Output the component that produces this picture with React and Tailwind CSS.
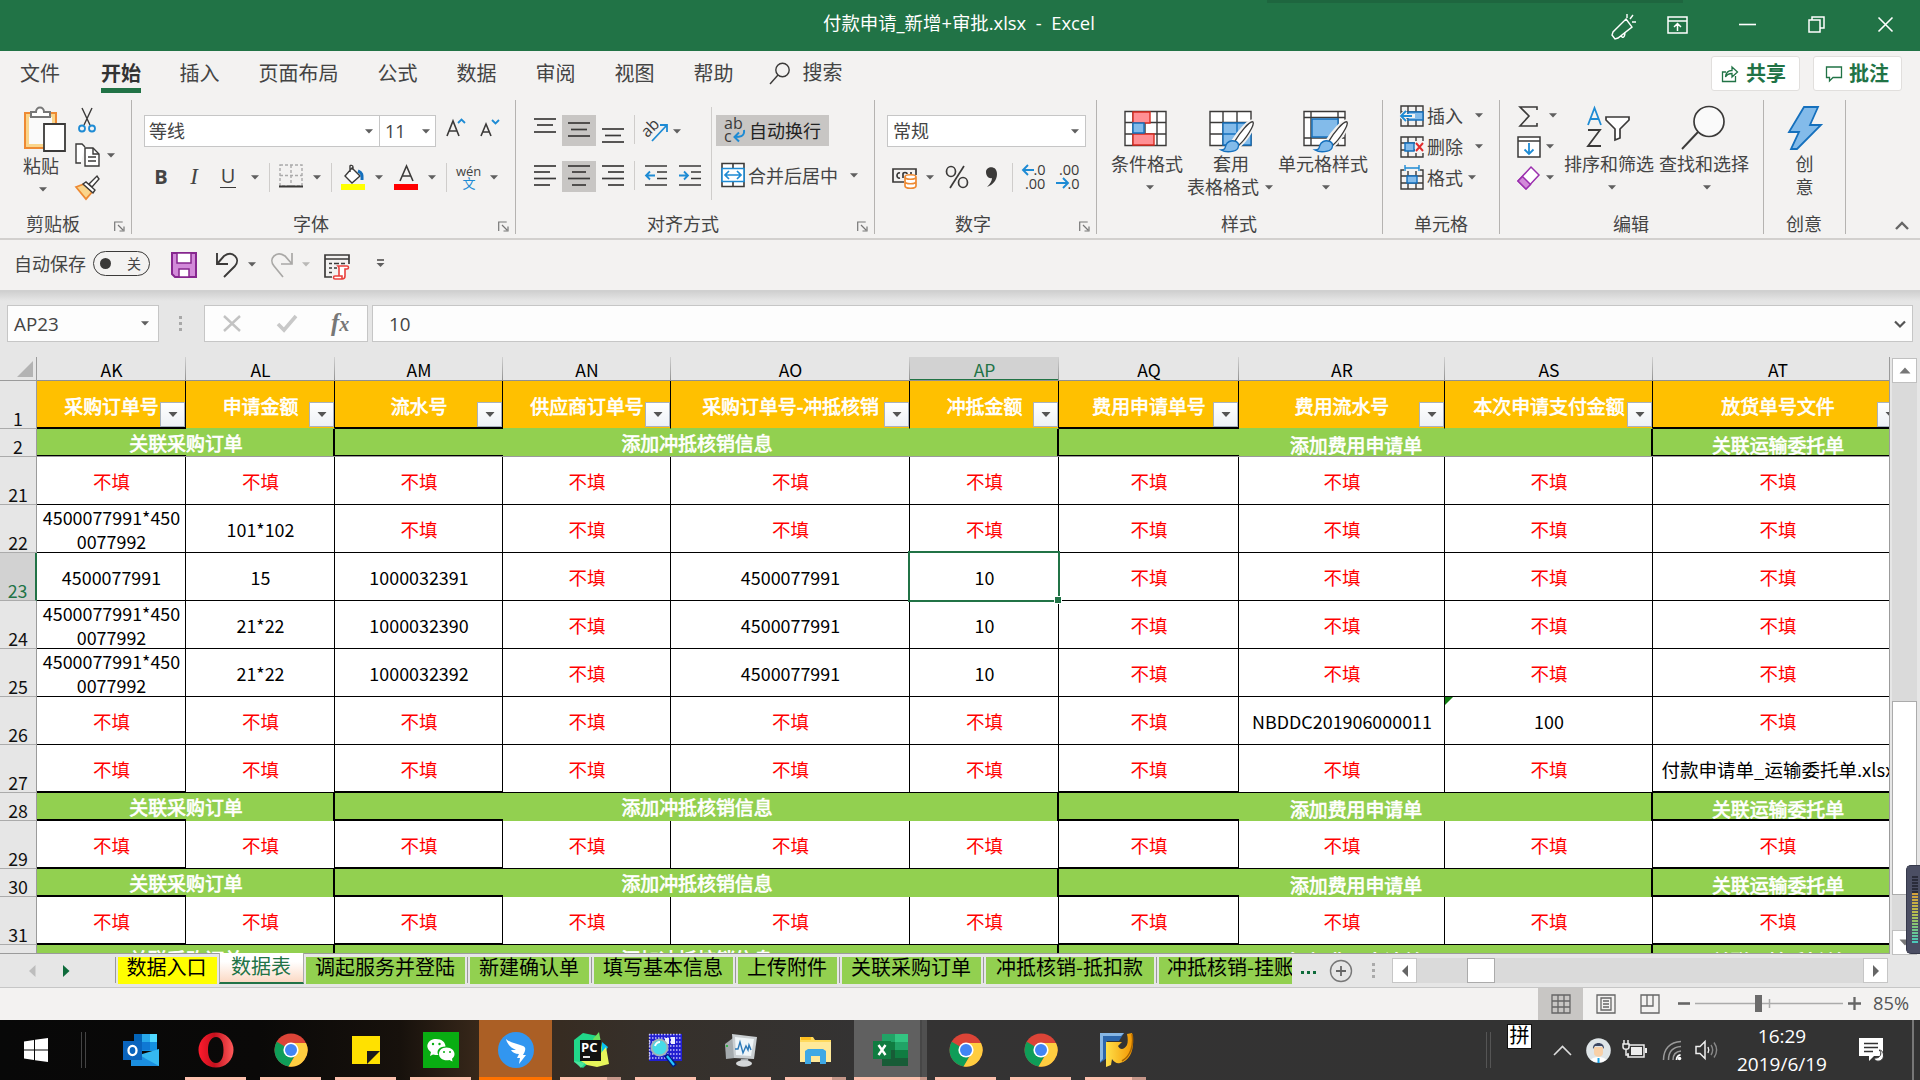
import React from "react";

const Arrow = ({ className = "", c = "#5f5f5f" }) => (
  <svg className={"shrink-0 " + className} width="8" height="5" viewBox="0 0 8 5"><path d="M0 .3h8L4 4.6z" fill={c} /></svg>
);
const I = ({ w = 24, h = 24, className = "", children }) => (
  <svg className={"shrink-0 overflow-visible " + className} width={w} height={h} viewBox={`0 0 ${w} ${h}`} fill="none" stroke="#3b3a39" strokeWidth="1.4">{children}</svg>
);
const Div = ({ className = "" }) => <div className={"h-[29px] w-px shrink-0 bg-[#cfcdcb] " + className} />;

const Launcher = ({ className = "" }) => (
  <I w={11} h={11} className={className}><path d="M.7 10V1h8M4 4l5 5M10 5.5V10H5.5" stroke="#777" strokeWidth="1.2" /></I>
);

function Group({ width, label, labelMl, launchMl, children }) {
  return (
    <section className={"flex h-[134px] shrink-0 flex-col border-r border-[#b5b3b1] " + width}>
      <div className="h-[115px]">{children}</div>
      <div className="flex h-[18px] items-center text-[18px] leading-[18px] whitespace-nowrap">
        <span className={labelMl}>{label}</span>
        {launchMl && <Launcher className={"mt-[5px] -translate-x-px " + launchMl} />}
      </div>
    </section>
  );
}

function TitleBar() {
  return (
    <header className="flex h-[51px] shrink-0 items-start bg-[#217346] text-white">
      <div className="w-[823px]" />
      <div className="mt-[12px] w-[444px] text-[18.400px] leading-[22px] whitespace-pre">付款申请_新增+审批.xlsx  -  Excel</div>
      <div className="flex h-[51px] flex-1 flex-col">
        <div className="h-[3px] w-[416px] bg-[#1e663f]" />
        <div className="flex h-[42px] items-center">
          <I w={26} h={28} className="ml-[343px] mt-[6px]"><path d="M16 6l6 8L8 25l-3 1-3-4 1-3zM11 22c1 4 4 3 4-3M17 1v4M20 6l3-4M22 9h4" stroke="#fff" /></I>
          <I w={21} h={18} className="ml-[31px] mt-[1px]"><path d="M1 1h19v16H1zM1 5h19M10.500 15V7.500M7 11l3.500-3.500L14 11" stroke="#fff" strokeWidth="1.500" /></I>
          <I w={17} h={4} className="ml-[51px]"><path d="M0 2.500h17" stroke="#fff" strokeWidth="1.600" /></I>
          <I w={17} h={17} className="ml-[52px]"><path d="M1 4h11v12H1zM4 4V1h12v11h-4" stroke="#fff" strokeWidth="1.500" /></I>
          <I w={17} h={17} className="ml-[52px]"><path d="M1.500 1.500l14 14M15.500 1.500l-14 14" stroke="#fff" strokeWidth="1.600" /></I>
        </div>
      </div>
    </header>
  );
}

const MENU = ["插入", "页面布局", "公式", "数据", "审阅", "视图", "帮助"];

function MenuTabs() {
  return (
    <nav className="flex h-[49px] shrink-0 items-start text-[20px] leading-[24px] whitespace-nowrap">
      <span className="mt-[11px] ml-[20px]">文件</span>
      <span className="mt-[11px] ml-[41px] h-[31px] border-b-[5px] border-[#217346] font-bold text-[#333]">开始</span>
      <div className="mt-[11px] ml-[38.500px] flex gap-[39px]">
        {MENU.map((m) => <span key={m}>{m}</span>)}
      </div>
      <I w={22} h={24} className="mt-[11px] ml-[35px]"><circle cx="13.500" cy="8" r="6.700" /><path d="M9 13L1 22" /></I>
      <span className="mt-[10px] ml-[12px]">搜索</span>
      <div className="mt-[5px] mr-[18px] ml-auto flex gap-[13px] font-bold text-[#217346]">
        <div className="flex h-[35px] w-[89px] items-center rounded-[3px] border border-[#e1dfdd] bg-white pl-[9px]">
          <I w={18} h={18}><path d="M5 7H1.500v9.500h13V11M4.500 12c.5-5 3-6.500 6.500-6.500V2l5.500 5-5.500 5V8.500c-3 0-5 .8-6.500 3.500z" stroke="#217346" strokeWidth="1.300" /></I>
          <span className="ml-[7px]">共享</span>
        </div>
        <div className="flex h-[35px] w-[89px] items-center rounded-[3px] border border-[#e1dfdd] bg-white pl-[11px]">
          <I w={18} h={18}><path d="M1.500 2h15v10.500H8L4.500 16v-3.500h-3z" stroke="#217346" strokeWidth="1.300" /></I>
          <span className="ml-[6px]">批注</span>
        </div>
      </div>
    </nav>
  );
}

const Lines = ({ rows, w = 22, h = 32, className = "" }) => (
  <I w={w} h={h} className={className}>
    {rows.map(([x1, x2, y]) => <path key={y} d={`M${x1} ${y}H${x2}`} strokeWidth="1.700" />)}
  </I>
);

function GridIcon({ kind }) {
  return (
    <I w={48} h={46}>
      <path d="M3 4.500h41v34H3z" fill="#fff" stroke="none" />
      {kind === "cond" && (
        <>
          <path d="M3 4.500h41v34H3zM3 15.500h41M3 27h41M11 4v34M35 4v34M23 4v34" />
          <path d="M11 5h17v11H11zM11 27h21v11H11z" fill="#ff8f94" stroke="#d92b20" />
          <path d="M11 16h11v10H11z" fill="#83bbea" stroke="#1570bd" />
        </>
      )}
      {kind === "table" && (
        <>
          <path d="M3 4.500h41v34H3zM3 15.500h41M3 27h41M16 4v34M30 4v34" />
          <path d="M16 16h28v22H16z" fill="#83bbea" stroke="#1570bd" /><path d="M30 16v22M16 27h28" stroke="#1570bd" />
        </>
      )}
      {kind === "cell" && (
        <>
          <path d="M3 4.500h41v34H3zM3 10.500h41M3 31h41M10 4v34M37 4v34" />
          <path d="M11 12h26v18H11z" fill="#83bbea" stroke="#1570bd" />
        </>
      )}
      {kind !== "cond" && (
        <>
          <path d="M46 15c2 3-8 18-14 23l-5-4c4-7 16-21 19-19z" fill="#fff" stroke="#f3f2f1" strokeWidth="5" />
          <path d="M46 15c2 3-8 18-14 23l-4-4c4-7 15-21 18-19z" fill="#fff" />
          <path d="M27 34c3 0 6 3 4 7-2 4-12 5-17 2 4 0 4-2 5-5 1-3 5-5 8-4z" fill="#83bbea" stroke="#1570bd" />
        </>
      )}
    </I>
  );
}

function Ribbon() {
  return (
    <div className="flex h-[138px] shrink-0 text-[18px] leading-[18px] whitespace-nowrap">
      <Group width="w-[132px]" label="剪贴板" labelMl="ml-[26px]" launchMl="ml-[35px]">
        <div className="flex">
          <div className="ml-[23px] flex w-[43px] flex-col pt-[6px]">
            <I w={43} h={47}>
              <path d="M2 7h31v35H2z" fill="#fad58b" stroke="#ee8a33" strokeWidth="2" /><path d="M6 11h23v27H6z" fill="#fafafa" stroke="none" />
              <path d="M8 11V6h5c0-6 8-6 8 0h6v5z" fill="#fff" stroke="#777" strokeWidth="2" />
              <path d="M21 18h21v27H21z" fill="#fff" stroke="#3b3a39" strokeWidth="1.800" />
            </I>
            <span className="mt-[4px]">粘贴</span>
            <Arrow className="mt-[12px] ml-[16px]" />
          </div>
          <div className="ml-[8px] pt-[7px]">
            <I w={28} h={26}><path d="M8 1l8 17M18 1l-8 17" /><circle cx="8" cy="21.500" r="3" stroke="#1e8bd4" strokeWidth="1.800" /><circle cx="18" cy="21.500" r="3" stroke="#1e8bd4" strokeWidth="1.800" /></I>
            <div className="mt-[9px] flex items-center">
              <I w={28} h={26}><path d="M7 21H2V2h6l3 3M11 6h8l6 6v12H11z" fill="#fff" /><path d="M19 6v6h6M14 15h8M14 19h8" /></I>
              <Arrow className="ml-[5px]" />
            </div>
            <I w={28} h={26} className="mt-[7px]"><path d="M2 12l8-3 8 8-6 7z" fill="#fad58b" stroke="#ee8a33" strokeWidth="1.800" /><path d="M9 9l3-2 9 8-2 3zM15 9l8-8 2 3-7 8z" fill="#fff" /></I>
          </div>
        </div>
      </Group>

      <Group width="w-[384px]" label="字体" labelMl="ml-[161px]" launchMl="ml-[170px]">
        <div className="flex h-[47px] pt-[15px]">
          <div className="ml-[12px] flex h-[32px] w-[236px] items-center justify-between border border-[#c6c6c6] bg-white pr-[6px] pl-[4px]"><span>等线</span><Arrow /></div>
          <div className="-ml-px flex h-[32px] w-[57px] items-center justify-between border border-[#c6c6c6] bg-white pr-[5px] pl-[5px]"><span>11</span><Arrow /></div>
          <I w={20} h={24} className="ml-[10px]"><path d="M1 21L7 6l6 15M3 16h8" strokeWidth="1.600" /><path d="M12 8l3.500-3.500L19 8" stroke="#1e8bd4" strokeWidth="1.800" /></I>
          <I w={20} h={24} className="ml-[14px]"><path d="M1 21L6 9l5 12M2.500 17h7" strokeWidth="1.600" /><path d="M12 5l3.500 3.500L19 5" stroke="#1e8bd4" strokeWidth="1.800" /></I>
        </div>
        <div className="mt-[14px] flex h-[32px] items-center">
          <span className="ml-[22px] w-[14px] text-center text-[20px] font-bold">B</span>
          <span className="ml-[18px] w-[16px] text-center font-['Liberation_Serif'] text-[23px] italic">I</span>
          <span className="ml-[18px] h-[22px] w-[16px] border-b-[1.500px] border-[#3b3a39] text-center text-[20px] leading-[20px]">U</span>
          <Arrow className="ml-[15px]" />
          <Div className="ml-[10px]" />
          <I w={24} h={24} className="ml-[9px] -mt-[2px]"><path d="M1 1h22v21H1zM12 1v21M1 11.500h22" stroke="#aaa" strokeDasharray="3 2" /><path d="M0 22.500h24" strokeWidth="2" /></I>
          <Arrow className="ml-[10px]" />
          <Div className="ml-[10px]" />
          <I w={25} h={26} className="ml-[9px] -mt-px"><path d="M11 4l8 8-8 7-7-7zM9 8V2c0-1 3-1 3 1v3" fill="#fff" /><path d="M17 7c5 2 4 5 4 9" stroke="#1570bd" strokeWidth="3" /><path d="M0 20h24v6H0z" fill="#ff0" stroke="none" /></I>
          <Arrow className="ml-[9px]" />
          <I w={24} h={26} className="ml-[11px] -mt-px"><path d="M6 17l6.500-15L19 17M8 12h9" strokeWidth="1.600" /><path d="M0 20h24v6H0z" fill="#f00" stroke="none" /></I>
          <Arrow className="ml-[10px]" />
          <Div className="ml-[10px]" />
          <div className="ml-[11px] w-[22px] text-center text-[13px] leading-[12px] whitespace-nowrap"><div className="-ml-[2px]">wén</div><div className="text-[#1e8bd4]">文</div></div>
          <Arrow className="ml-[10px]" />
        </div>
      </Group>

      <Group width="w-[359px]" label="对齐方式" labelMl="ml-[131px]" launchMl="ml-[139px]">
        <div className="flex">
          <div className="w-[195px]">
            <div className="flex h-[47px] pt-[15px]">
              <Lines className="ml-[18px]" rows={[[0, 22, 4], [3, 19, 10], [0, 22, 17]]} />
              <div className="ml-[6px] h-[31px] w-[34px] bg-[#c8c6c4] pl-[6px]"><Lines rows={[[0, 22, 8], [3, 19, 14.5], [0, 22, 21]]} /></div>
              <Lines className="ml-[6px]" rows={[[0, 22, 14], [3, 19, 20.5], [0, 22, 27]]} />
              <Div className="ml-[10px]" />
              <I w={25} h={28} className="ml-[9px]"><text x="-4" y="18" transform="rotate(-45 6 12)" fontSize="16" fill="#3b3a39" stroke="none">ab</text><path d="M8 26L23 10M16 10h7v7" stroke="#1e8bd4" strokeWidth="1.800" /></I>
              <Arrow className="mt-[14px] ml-[4px]" />
            </div>
            <div className="mt-[14px] flex h-[32px]">
              <Lines className="ml-[18px]" rows={[[0, 22, 5], [0, 16, 11], [0, 22, 17.500], [0, 16, 24]]} />
              <div className="ml-[6px] h-[31px] w-[34px] bg-[#c8c6c4] pl-[6px]"><Lines rows={[[0, 22, 5], [4, 18, 11], [0, 22, 17.500], [4, 18, 24]]} /></div>
              <Lines className="ml-[6px]" rows={[[0, 22, 5], [6, 22, 11], [0, 22, 17.500], [6, 22, 24]]} />
              <Div className="ml-[10px]" />
              <I w={22} h={32} className="ml-[10px]"><path d="M0 5h22M12 11h10M12 17.500h10M0 24h22" strokeWidth="1.700" /><path d="M10 14.500H1M5 10.500l-4 4 4 4" stroke="#1e8bd4" strokeWidth="1.800" /></I>
              <I w={22} h={32} className="ml-[12px]"><path d="M0 5h22M12 11h10M12 17.500h10M0 24h22" strokeWidth="1.700" /><path d="M0 14.500h9M5 10.500l4 4-4 4" stroke="#1e8bd4" strokeWidth="1.800" /></I>
            </div>
          </div>
          <div className="mt-[7px] h-[93px] w-px bg-[#cfcdcb]" />
          <div>
            <div className="mt-[15px] ml-[4px] flex h-[31px] w-[113px] items-center bg-[#c8c6c4] pl-[8px] text-[#222]">
              <I w={22} h={28}><text x="0" y="11.500" fontSize="16" fill="#3b3a39" stroke="none">ab</text><text x="0" y="25" fontSize="16" fill="#3b3a39" stroke="none">c</text><path d="M20 13c1 7-5 7-9 7M15 15.500L10.500 20l4.500 4.500" stroke="#1e8bd4" strokeWidth="2" /></I>
              <span className="ml-[3px]">自动换行</span>
            </div>
            <div className="mt-[14px] flex h-[31px] items-center">
              <I w={24} h={26} className="ml-[9px] -mt-px"><path d="M1 1.500h22v23H1zM1 7h22M1 19h22M12 1v6M12 19v6" fill="#fff" strokeWidth="1.600" /><path d="M1 6.500h22v13H1z" fill="#fff" stroke="#1e8bd4" strokeWidth="1.600" /><path d="M4 13h16M8 9l-4 4 4 4M16 9l4 4-4 4" stroke="#1e8bd4" strokeWidth="1.700" /></I>
              <span className="ml-[3px]">合并后居中</span><Arrow className="ml-[12px]" />
            </div>
          </div>
        </div>
      </Group>

      <Group width="w-[222px]" label="数字" labelMl="ml-[80px]" launchMl="ml-[89px]">
        <div className="flex h-[47px] pt-[15px]">
          <div className="ml-[12px] flex h-[32px] w-[199px] items-center justify-between border border-[#c6c6c6] bg-white pr-[6px] pl-[5px]"><span>常规</span><Arrow /></div>
        </div>
        <div className="mt-[14px] flex h-[32px] items-center">
          <I w={25} h={24} className="ml-[17px] mt-px"><path d="M12 16H1V3h23v6M8 7C4 6 4 13 8 12M11 12V8c0-2 4-2 4 0M19 6v3" strokeWidth="1.700" /><path d="M13 11v9c0 3 11 3 11 0v-9c0-3-11-3-11 0c0 3 11 3 11 0M13 15.500c0 3 11 3 11 0" fill="#fff" stroke="#ee8a33" strokeWidth="1.700" /></I>
          <Arrow className="ml-[9px]" />
          <I w={24} h={24} className="ml-[11px]"><ellipse cx="6" cy="6.500" rx="4.500" ry="5" strokeWidth="1.700" /><ellipse cx="18" cy="17.500" rx="4.500" ry="5" strokeWidth="1.700" /><path d="M19 1L5 23" strokeWidth="1.700" /></I>
          <I w={14} h={24} className="ml-[16px]"><path d="M1 7c0-6 11-7 11 2 0 6-4 11-10 13 3-3 5-6 5-9-3 1-6-2-6-6z" fill="#3b3a39" stroke="none" /></I>
          <Div className="ml-[13px]" />
          <I w={23} h={26} className="ml-[9px]"><text x="11.500" y="10.500" fontSize="14.500" fill="#3b3a39" stroke="none">.0</text><text x="3" y="24.500" fontSize="14.500" fill="#3b3a39" stroke="none">.00</text><path d="M12 6H1M6 1L1 6l5 5" stroke="#1e8bd4" strokeWidth="1.900" /></I>
          <I w={23} h={26} className="ml-[11px]"><text x="3" y="10.500" fontSize="14.500" fill="#3b3a39" stroke="none">.00</text><text x="11.500" y="24.500" fontSize="14.500" fill="#3b3a39" stroke="none">.0</text><path d="M0 19h12M7 14l5 5-5 5" stroke="#1e8bd4" strokeWidth="1.900" /></I>
        </div>
      </Group>

      <Group width="w-[286px]" label="样式" labelMl="ml-[124px]">
        <div className="flex pt-[7px] leading-[23px]">
          <div className="ml-[12px] flex w-[76px] flex-col items-center"><div className="-ml-[2px]"><GridIcon kind="cond" /></div><span>条件格式</span><Arrow className="mt-[9px] ml-[6px]" /></div>
          <div className="flex w-[90px] flex-col"><div className="ml-[22px]"><GridIcon kind="table" /></div><span className="ml-[28px]">套用</span><span className="flex items-center pl-[2px]">表格格式<Arrow className="ml-[6px]" /></span></div>
          <div className="ml-[2px] flex w-[92px] flex-col items-center"><div className="ml-[3px]"><GridIcon kind="cell" /></div><span>单元格样式</span><Arrow className="mt-[9px] ml-[6px]" /></div>
        </div>
      </Group>

      <Group width="w-[117px]" label="单元格" labelMl="ml-[31px]">
        <div className="flex h-[31px] items-center pl-[17px]">
          <I w={24} h={24}><path d="M1 2h22v20H1zM1 8h22M1 15h22M8 2v20M16 2v20" /><path d="M8 8h15v8H8z" fill="#83bbea" stroke="#1570bd" /><path d="M15 12H1M6 7l-5 5 5 5" stroke="#f3f2f1" strokeWidth="4" /><path d="M12 12H1M6 7l-5 5 5 5" stroke="#1e8bd4" strokeWidth="1.800" /></I>
          <span className="ml-[3px]">插入</span><Arrow className="ml-[12px]" />
        </div>
        <div className="flex h-[31px] items-center pl-[17px]">
          <I w={24} h={24}><path d="M1 2h22v20H1zM1 8h22M1 15h22M8 2v20M16 2v20" /><path d="M5 8h9v8H5z" fill="#83bbea" stroke="#1570bd" /><path d="M15 6h9v12h-9z" fill="#f3f2f1" stroke="none" /><path d="M16 8l7 8M23 8l-7 8" stroke="#e22b2b" strokeWidth="1.900" /></I>
          <span className="ml-[3px]">删除</span><Arrow className="ml-[12px]" />
        </div>
        <div className="flex h-[31px] items-center pl-[17px]">
          <I w={24} h={26}><path d="M1 5h22v19H1zM1 11h22M1 18h22M8 5v19M16 5v19" /><path d="M7 11h10v7H7z" fill="#83bbea" stroke="#1570bd" /><path d="M4 0h16v6H4z" fill="#f3f2f1" stroke="none" /><path d="M5 3h14M5 0v6M19 0v6" stroke="#1e8bd4" /></I>
          <span className="ml-[3px]">格式</span><Arrow className="ml-[5px]" />
        </div>
      </Group>

      <Group width="w-[264px]" label="编辑" labelMl="ml-[113px]">
        <div className="flex">
          <div className="w-[64px] pl-[17px]">
            <div className="flex h-[31px] items-center"><I w={24} h={24}><path d="M20 6V3H3l9 9-9 10h17v-3" strokeWidth="1.600" /></I><Arrow className="ml-[8px]" /></div>
            <div className="flex h-[31px] items-center"><I w={24} h={24}><path d="M1 2h22v20H1zM1 6h22" fill="#fff" strokeWidth="1.500" /><path d="M12 8v11M7.500 14.500L12 19l4.500-4.500" stroke="#1e8bd4" strokeWidth="1.800" /></I><Arrow className="ml-[5px]" /></div>
            <div className="flex h-[31px] items-center"><I w={24} h={24}><path d="M14 1l8 8L9 23l-8-8z" fill="#fff" stroke="#9b2fae" strokeWidth="1.500" /><path d="M5.500 10.500l8 8L9 23l-8-8z" fill="#d28ad9" stroke="#9b2fae" strokeWidth="1.500" /></I><Arrow className="ml-[5px]" /></div>
          </div>
          <div className="flex w-[90px] flex-col items-center pt-[7px] leading-[23px]">
            <I w={48} h={46}><path d="M3 18L9.500 1 16 18M5 12h9" stroke="#1e8bd4" strokeWidth="1.800" /><path d="M3 23h12L3 39h13" strokeWidth="1.800" /><path d="M21 10h23v3l-9 9v9l-5 2V22l-9-9z" fill="#fff" strokeWidth="1.700" /></I>
            <span>排序和筛选</span><Arrow className="mt-[9px] ml-[6px]" />
          </div>
          <div className="ml-[5px] flex w-[90px] flex-col items-center pt-[7px] leading-[23px]">
            <I w={48} h={46}><circle cx="29" cy="14.500" r="15" fill="#fafafa" strokeWidth="1.700" /><path d="M18 25L2 42" strokeWidth="1.900" /></I>
            <span>查找和选择</span><Arrow className="mt-[9px] ml-[6px]" />
          </div>
        </div>
      </Group>

      <Group width="w-[82px]" label="创意" labelMl="ml-[22px]">
        <div className="flex flex-col items-center pt-[7px] leading-[23px]">
          <I w={36} h={46}><path d="M17 0h14l-8 18h11L10 42H4l8-17H2z" fill="#83bbea" stroke="#1570bd" strokeWidth="1.800" /></I>
          <span>创</span><span>意</span>
        </div>
      </Group>
      <I w={16} h={11} className="mt-[120px] ml-[48px]"><path d="M2 9l6-6 6 6" stroke="#666" strokeWidth="2.400" /></I>
    </div>
  );
}

function QuickAccess() {
  return (
    <div className="flex h-[52px] shrink-0 items-center border-t-2 border-[#d2d0ce] pb-[3px] text-[18px] leading-[18px]">
      <span className="ml-[14px] w-[72px] whitespace-nowrap">自动保存</span>
      <div className="ml-[7px] flex h-[25px] w-[57px] items-center justify-between rounded-full border-[1.500px] border-[#3b3a39] pr-[8px] pl-[6px] text-[14px]"><span className="size-[11px] rounded-full bg-[#3b3a39]" />关</div>
      <I w={26} h={26} className="mt-[3px] ml-[21px]"><path d="M1 1h24v24H4l-3-3z" fill="#d28ad9" stroke="#86278f" strokeWidth="2" /><path d="M6 1h14v10H6zM8 17h10v8H8z" fill="#fff" stroke="#86278f" strokeWidth="1.500" /></I>
      <I w={24} h={26} className="mt-[2px] ml-[18px]"><path d="M2 1v11h11M2 12L9 4c9-6 17 3 11 10L9 25" strokeWidth="1.900" /></I>
      <Arrow className="mt-[2px] ml-[9px]" />
      <I w={24} h={26} className="mt-[2px] ml-[14px]"><path d="M22 1v11H11M22 12l-7-8C6-2-2 7 4 14l9 11" strokeWidth="1.700" stroke="#a9a8a6" /></I>
      <Arrow className="mt-[2px] ml-[8px]" c="#b9b8b6" />
      <I w={26} h={26} className="mt-[4px] ml-[14px]"><path d="M8 24H1V2h24v9M1 6h24" strokeWidth="1.700" /><path d="M5 10.500h3M5 15h3M5 19.500h3M10 10.500h5M17 10.500h4M10 15h3" strokeWidth="1.500" /><path d="M14 13h9c2 0 2 3 0 3h-2v7c0 3-2 3-3 3h-7c-2 0-2-3 0-3h4V15c0-1-1-2-1-2zM15 23h3v3" fill="#fff" stroke="#e9403c" strokeWidth="1.600" /></I>
      <I w={9} h={9} className="ml-[26px]"><path d="M1 1h7" /><path d="M.5 4h8l-4 4z" fill="#5f5f5f" stroke="none" /></I>
    </div>
  );
}

function FormulaBar() {
  return (
    <div className="flex h-[66px] shrink-0 items-start bg-[linear-gradient(#cfcfcf,#e6e6e6_10px)] pt-[14px] text-[18.800px] leading-[34px] text-[#444]">
      <div className="ml-[7px] flex h-[37px] w-[152px] items-center justify-between border border-[#c6c6c6] bg-[#fdfdfd] pr-[9px] pl-[6px]">AP23<Arrow /></div>
      <I w={3} h={16} className="mt-[11px] ml-[20px]"><path d="M0 0h3v3H0zM0 6h3v3H0zM0 12h3v3H0z" fill="#a8a8a8" stroke="none" /></I>
      <div className="ml-[22px] flex h-[37px] w-[164px] items-center border border-[#c6c6c6] bg-[#fdfdfd]">
        <I w={18} h={17} className="ml-[18px]"><path d="M1 1l16 15M17 1L1 16" stroke="#c3c3c3" strokeWidth="2.400" /></I>
        <I w={20} h={17} className="ml-[36px]"><path d="M1 9l6 6L19 1" stroke="#c8c8c8" strokeWidth="3.600" /></I>
        <span className="ml-[34px] font-['Liberation_Serif'] text-[25px] leading-[30px] font-bold text-[#777] italic">f<span className="text-[20px]">x</span></span>
      </div>
      <div className="ml-[4px] flex h-[37px] w-[1541px] items-center justify-between border border-[#c6c6c6] bg-[#fdfdfd] pr-[6px] pl-[16px]">10
        <I w={12} h={8}><path d="M1 1.500l5 5 5-5" stroke="#555" strokeWidth="2.200" /></I>
      </div>
    </div>
  );
}

/* ---------- worksheet ---------- */
const COLS = [
  { id: "AK", w: "w-[149px]", t: "采购订单号", thick: true },
  { id: "AL", w: "w-[149px]", t: "申请金额" },
  { id: "AM", w: "w-[168px]", t: "流水号", thick: true },
  { id: "AN", w: "w-[168px]", t: "供应商订单号" },
  { id: "AO", w: "w-[239px]", t: "采购订单号-冲抵核销" },
  { id: "AP", w: "w-[149px]", t: "冲抵金额" },
  { id: "AQ", w: "w-[180px]", t: "费用申请单号", thick: true },
  { id: "AR", w: "w-[206px]", t: "费用流水号" },
  { id: "AS", w: "w-[208px]", t: "本次申请支付金额" },
  { id: "AT", w: "w-[250px]", t: "放货单号文件", thick: true },
];
const N = "不填";
const L = "4500077991*450\n0077992";
const ROWS = [
  [21, [N, N, N, N, N, N, N, N, N, N]],
  [22, [L, "101*102", N, N, N, N, N, N, N, N]],
  [23, ["4500077991", "15", "1000032391", N, "4500077991", "10", N, N, N, N]],
  [24, [L, "21*22", "1000032390", N, "4500077991", "10", N, N, N, N]],
  [25, [L, "21*22", "1000032392", N, "4500077991", "10", N, N, N, N]],
  [26, [N, N, N, N, N, N, N, "NBDDC201906000011", "100", N]],
  [27, [N, N, N, N, N, N, N, N, N, "付款申请单_运输委托单.xlsx"], true],
];
const BLANK = [N, N, N, N, N, N, N, N, N, N];

const RowHead = ({ n, active, h }) => (
  <div className={"flex w-[37px] shrink-0 items-end justify-center border-r border-b border-b-[#ababab] pb-[2px] text-[17.800px] leading-[16px] " + h + (active ? " border-r-2 border-r-[#217346] bg-[#d2d2d2] text-[#217346]" : " border-r-[#9b9b9b] bg-[#e6e6e6] text-[#111]")}>{n}</div>
);

function DataRow({ n, cells, end }) {
  return (
    <div className="flex h-[48px] shrink-0">
      <RowHead n={n} active={n === 23} h="h-[48px]" />
      {cells.map((c, i) => {
        const col = COLS[i];
        const file = n === 27 && i === 9;
        const sel = n === 23 && i === 5;
        return (
          <div key={i} className={"relative flex shrink-0 items-center justify-center border-r border-black bg-white pl-px text-center whitespace-pre " + col.w + (end && col.thick ? " border-b-2 pt-[2px]" : " border-b pt-px") + (c === N ? " text-[18.500px] text-[#f00]" : file ? " text-[18.500px]" : " text-[17.900px]") + (c === L ? " leading-[24px]" : " leading-[20px]")}>
            {c}
            {n === 26 && i === 8 && <i className="absolute top-0 left-0 size-[8px] bg-[#107c10] [clip-path:polygon(0_0,100%_0,0_100%)]" />}
            {sel && (
              <>
                <i className="absolute -top-[2px] -left-[2px] z-10 h-[51px] w-[152px] border-2 border-[#217346]" />
                <i className="absolute top-[43px] left-[144px] z-20 size-[8px] border border-white bg-[#217346]" />
              </>
            )}
          </div>
        );
      })}
    </div>
  );
}

const BANDS = [
  ["关联采购订单", "w-[298px]", "w-[149px]", "pb-[1px]"],
  ["添加冲抵核销信息", "w-[724px]", "w-[168px]", "pb-[1px]"],
  ["添加费用申请单", "w-[594px]", "w-[180px]", "pt-[3px]"],
  ["关联运输委托单", "w-[250px]", "w-[250px]", "pt-[3px]"],
];

function BandRow({ n, frozen }) {
  return (
    <div className="flex h-[28px] shrink-0">
      <RowHead n={n} h="h-[28px]" />
      {BANDS.map(([t, w, fw, pad]) => (
        <div key={t} className={"relative flex shrink-0 items-center justify-center border-r-2 border-black bg-[#92d050] pl-[2px] text-[18.900px] leading-[20px] text-white [-webkit-text-stroke:0.7px_#fff] " + w + " " + pad}>
          {t}
          <i className={"absolute bottom-0 left-0 bg-black " + fw + (frozen ? " mb-px h-px" : " h-[2px]")} />
          {frozen && <i className="absolute right-[-2px] bottom-0 left-0 h-px bg-[#9b9b9b]" />}
        </div>
      ))}
    </div>
  );
}

function Sheet() {
  return (
    <div className="flex h-[597px] w-[1890px] shrink-0 flex-col overflow-hidden border-r border-b border-[#9b9b9b] font-['Noto_Sans_CJK_SC',sans-serif] text-black">
      <div className="flex h-[24px] shrink-0 bg-[#e6e6e6]">
        <div className="flex w-[37px] shrink-0 items-end justify-end border-r border-b border-[#9b9b9b] pr-[3px] pb-[3px]"><I w={16} h={16}><path d="M16 0v16H0z" fill="#b3b3b3" stroke="none" /></I></div>
        {COLS.map((c) => (
          <div key={c.id} className={"flex shrink-0 justify-center border-r border-b border-[#9b9b9b] [border-image:linear-gradient(#d4d4d4,#8f8f8f)_1] pl-px text-[17.500px] leading-[26px] " + c.w + (c.id === "AP" ? " bg-[#d2d2d2] text-[#217346] shadow-[inset_0_-1px_0_#217346]" : "")}>{c.id}</div>
        ))}
      </div>
      <div className="flex h-[48px] shrink-0">
        <RowHead n={1} h="h-[48px]" />
        {COLS.map((c) => (
          <div key={c.id} className={"relative flex shrink-0 items-center justify-center border-r border-r-black bg-[#ffc000] pl-px text-[18.900px] leading-[20px] whitespace-nowrap text-white [-webkit-text-stroke:0.7px_#fff] " + c.w + (c.thick ? " border-b-2 border-b-black pt-[3px]" : " border-b border-b-[#92d050] pt-[2px]")}>
            {c.t}
            <span className={"absolute flex h-[25px] w-[25px] items-center justify-center border border-[#a9b2bd] bg-linear-to-b from-white to-[#eef1f5] " + (c.thick ? "right-0 bottom-0" : "right-0 bottom-px")}><Arrow c="#555" className="scale-[1.15]" /></span>
          </div>
        ))}
      </div>
      <BandRow n={2} frozen />
      {ROWS.map(([n, cells, end]) => <DataRow key={n} n={n} cells={cells} end={end} />)}
      <BandRow n={28} />
      <DataRow n={29} cells={BLANK} end />
      <BandRow n={30} />
      <DataRow n={31} cells={BLANK} end />
      <BandRow n="" />
    </div>
  );
}

function SheetArea() {
  return (
    <div className="relative flex h-[598px] shrink-0 bg-[#e6e6e6]">
      <Sheet />
      <div className="ml-[2px] mt-px flex h-[597px] w-[25px] flex-col bg-[#dadada]">
        <div className="flex h-[25px] items-center justify-center border border-[#c0c0c0] bg-white"><Arrow className="rotate-180 scale-[1.4]" c="#777" /></div>
        <div className="mt-[318px] h-[194px] border border-[#ababab] bg-white" />
        <div className="mt-auto flex h-[25px] items-center justify-center border border-[#c0c0c0] bg-white"><Arrow className="scale-[1.4]" c="#777" /></div>
      </div>
      <div className="absolute top-[508px] right-0 z-30 flex h-[89px] w-[14px] flex-col items-end rounded-l-[5px] border border-r-0 border-[#35384a] bg-[#4b4e63] pt-[10px] pr-[2px]">
        <div className="h-[17px] w-[6px] bg-[repeating-linear-gradient(#2a2c3a_0_2px,#4b4e63_2px_3px)]" />
        <div className="h-[51px] w-[6px] bg-[repeating-linear-gradient(transparent_0_2px,#4b4e63_2px_3px),linear-gradient(#d5a03a,#b8bf4e_40%,#7fc87a_65%,#45c8c0)]" />
      </div>
    </div>
  );
}

const TABS = [
  ["调起服务并登陆", "w-[159px]"], ["新建确认单", "w-[119px]"], ["填写基本信息", "w-[139px]"], ["上传附件", "w-[99px]"],
  ["关联采购订单", "w-[139px]"], ["冲抵核销-抵扣款", "w-[168px]"],
];

function SheetTabs() {
  return (
    <div className="flex h-[33px] shrink-0 items-start border-b border-[#c6c6c6] bg-[#e6e6e6] font-['Noto_Sans_CJK_SC',sans-serif] text-[20px] leading-[20px] whitespace-nowrap text-black">
      <I w={7} h={12} className="mt-[10px] ml-[29px]"><path d="M6.500 0v12L0 6z" fill="#bdbdbd" stroke="none" /></I>
      <I w={7} h={12} className="mt-[10px] ml-[27px]"><path d="M0 0v12l6.500-6z" fill="#0e6b3b" stroke="none" /></I>
      <i className="mt-[2px] ml-[45px] h-[26px] w-px bg-[#999]" />
      <span className="mt-[2px] ml-[2px] h-[27px] w-[99px] bg-[#ff0] pr-[2px] text-center">数据入口</span>
      <span className="z-10 -mt-[2px] ml-[2px] h-[31px] w-[85px] border-x border-b-2 border-x-[#ababab] border-b-[#217346] bg-linear-to-b from-white from-30% to-[#fbd9c4] pt-[3px] pr-px text-center text-[#217346]">数据表</span>
      {TABS.map(([t, w], i) => (
        <React.Fragment key={t}>
          {i > 0 && <i className="mt-[2px] ml-[2px] h-[26px] w-px bg-[#999]" />}
          <span className={"mt-[2px] ml-[2px] h-[27px] bg-[#92d050] pr-px text-center " + w}>{t}</span>
        </React.Fragment>
      ))}
      <i className="mt-[2px] ml-[2px] h-[26px] w-px bg-[#999]" />
      <span className="mt-[2px] ml-[2px] h-[27px] w-[133px] overflow-hidden bg-[#92d050] pl-[8px]">冲抵核销-挂账</span>
      <I w={16} h={4} className="mt-[16px] ml-[9px]"><path d="M0 0h3v3H0zM6 0h3v3H6zM12 0h3v3h-3z" fill="#0e6b3b" stroke="none" /></I>
      <I w={24} h={24} className="mt-[4px] ml-auto"><circle cx="12" cy="12" r="10.500" stroke="#777" /><path d="M12 7v10M7 12h10" stroke="#666" strokeWidth="1.800" /></I>
      <I w={3} h={16} className="mt-[8px] ml-[19px]"><path d="M0 0h3v3H0zM0 6h3v3H0zM0 12h3v3H0z" fill="#aaa" stroke="none" /></I>
      <div className="mt-[3px] mr-[32px] ml-[17px] flex h-[25px] w-[496px] bg-[#dadada]">
        <div className="flex w-[25px] items-center justify-center border border-[#c6c6c6] bg-white"><I w={6} h={12}><path d="M6 0v12L0 6z" fill="#666" stroke="none" /></I></div>
        <div className="ml-[50px] w-[28px] border border-[#ababab] bg-white" />
        <div className="ml-auto flex w-[25px] items-center justify-center border border-[#c6c6c6] bg-white"><I w={6} h={12}><path d="M0 0v12l6-6z" fill="#666" stroke="none" /></I></div>
      </div>
    </div>
  );
}

function StatusBar() {
  return (
    <div className="flex h-[32px] shrink-0 items-center bg-[#f3f2f1] text-[18.300px] leading-[20px]">
      <div className="ml-[1538px] flex h-[32px] w-[45px] items-center justify-center bg-[#c8c6c4]"><I w={20} h={20}><path d="M1 1h18v18H1zM1 7h18M1 13h18M7 1v18M13 1v18" stroke="#666" strokeWidth="1.300" /></I></div>
      <I w={20} h={20} className="ml-[13px]"><path d="M1 1h18v18H1zM5 4h10v12H5zM7 7h6M7 10h6M7 13h6" stroke="#666" strokeWidth="1.300" /></I>
      <I w={20} h={20} className="ml-[24px]"><path d="M1 1h18v18H1zM1 12h12V1M7 1v11" stroke="#666" strokeWidth="1.300" /></I>
      <I w={12} h={4} className="ml-[18px]"><path d="M0 1.500h12" stroke="#666" strokeWidth="2.600" /></I>
      <I w={148} h={20} className="ml-[5px]"><path d="M0 9.500h148M74.500 5v9" stroke="#ababab" strokeWidth="1.500" /><path d="M60 1h7v17h-7z" fill="#6b6b6b" stroke="none" /></I>
      <I w={13} h={14} className="ml-[5px]"><path d="M0 6.500h13M6.500 0v13" stroke="#666" strokeWidth="2.300" /></I>
      <span className="ml-[12px] -mt-[2px] text-[#555]">85%</span>
    </div>
  );
}

/* ---------- taskbar ---------- */
const Chrome = () => (
  <svg width="34" height="34" viewBox="0 0 34 34">
    <circle cx="17" cy="17" r="16.500" fill="#db4437" />
    <path d="M17 17L2.700 8.750A16.500 16.500 0 0 0 15 33.400L21 22z" fill="#0f9d58" />
    <path d="M17 10h15a16.500 16.500 0 0 1-17.500 23.400L22 21z" fill="#ffcd40" />
    <circle cx="17" cy="17" r="7.600" fill="#fff" /><circle cx="17" cy="17" r="6" fill="#4285f4" />
  </svg>
);
const Outlook = () => (
  <svg width="36" height="34" viewBox="0 0 36 34">
    <path d="M11 1h23v17H11z" fill="#1490df" /><path d="M11 1h8v8h-8z" fill="#0364b8" /><path d="M19 9h8v8h-8z" fill="#0f78d4" /><path d="M27 1h7v8h-7z" fill="#50d9ff" /><path d="M19 1h8v8h-8z" fill="#28a8ea" />
    <path d="M8 16l14 9 14-9v17H8z" fill="#1b8fe0" /><path d="M36 16v17L16 22z" fill="#35b8f1" /><path d="M0 8h19v19H0z" fill="#0a64bd" /><ellipse cx="9.500" cy="17.500" rx="4" ry="4.600" fill="none" stroke="#fff" strokeWidth="2.300" />
  </svg>
);
const Opera = () => (
  <svg width="36" height="36" viewBox="0 0 36 36"><defs><linearGradient id="op" x1="0" x2="1"><stop offset="0" stopColor="#ff1b2d" /><stop offset=".45" stopColor="#c4101d" /><stop offset="1" stopColor="#ff5a5a" /></linearGradient></defs>
    <path fillRule="evenodd" fill="url(#op)" d="M18 .5a17.500 17.500 0 1 0 0 35 17.500 17.500 0 1 0 0-35zM18 5c5 0 7.500 5.500 7.500 13S23 31 18 31s-8-5.500-8-13S13 5 18 5z" /></svg>
);
const Sticky = () => <svg width="28" height="28" viewBox="0 0 28 28"><path d="M0 0h28v28H0z" fill="#ffe100" /><path d="M15 28V15h13z" fill="#1a1a1a" /></svg>;
const WeChat = () => (
  <svg width="36" height="36" viewBox="0 0 36 36"><path d="M0 0h36v36H0z" fill="#09ad12" /><path d="M7 24l1-4c-7-5-3-13 5-13 6 0 9.500 3.500 9.500 7.500-7 0-9.500 5-7 8.500-2 0-4 0-5.500-.5z" fill="#fff" /><path d="M23.500 15.500c5 0 8 3.300 8 6.500 0 2-1 3.500-2.500 4.700l.5 2.800-3-1.500c-6 1.500-10.500-2-10.500-6 0-3.700 3-6.500 7.500-6.500z" fill="#fff" />
    <g fill="#09ad12"><circle cx="10" cy="12" r="1.200" /><circle cx="16.500" cy="12" r="1.200" /><circle cx="21" cy="20" r="1" /><circle cx="27" cy="20" r="1" /></g></svg>
);
const Ding = () => <svg width="36" height="36" viewBox="0 0 36 36"><circle cx="18" cy="18" r="18" fill="#3296f0" /><path d="M8 7c4 4 12 5 17 7 3 1 3 4 0 9h3l-7 9 1-6h-3l2-4c-4 0-7-2-8-4l5 0c-5-2-9-6-10-11z" fill="#fff" /></svg>;
const PyCharm = () => (
  <svg width="36" height="36" viewBox="0 0 36 36"><path d="M1 8L10 1l15 3 2 16-17 16-9-6z" fill="#21d789" /><path d="M20 7l6-7 4 21-6 4z" fill="#6be05e" /><path d="M29 10l6 5-6 10z" fill="#07c3f2" /><path d="M8 29l20-8 5-6 3 17-12 3-10-2z" fill="#e8f65a" /><path d="M1 29l7 7 4-5z" fill="#4ce49c" /><path d="M7 8h21v21H7z" fill="#111" />
    <text x="8" y="19.500" fontSize="13" fontWeight="700" fill="#fff">PC</text><path d="M10 25h7" stroke="#fff" strokeWidth="1.800" /></svg>
);
const Spy = () => (
  <svg width="36" height="36" viewBox="0 0 36 36"><path d="M1 2h33v27H1z" fill="#221fd0" /><path d="M1 2.500h33M1 6h33M1 10h33M1 14h33M1 18h33M1 22h33M1 26h33M1.500 2v27" stroke="#c7c5f7" strokeDasharray="1.500 1.500" strokeWidth="1.300" /><path d="M17 6h4v6h-4zM23 5h4v7h-4z" fill="#eef0ff" /><path d="M18 23l9 11" stroke="#001a80" strokeWidth="5" /><path d="M19 24l7 9" stroke="#25c5ff" strokeWidth="2.200" /><circle cx="11.500" cy="15.500" r="8" fill="#46dbe8" stroke="#9fb4b8" strokeWidth="2" /><path d="M7 14c1-3 3-4 5-4" stroke="#fff" strokeWidth="2" fill="none" /></svg>
);
const Monitor = () => (
  <svg width="36" height="34" viewBox="0 0 36 34"><path d="M2 11l8-6 2 20-9 1z" fill="#a5abae" /><path d="M9 1l25 3-3 22-20-1z" fill="#c9ced1" /><path d="M12 4l19 2-3 17-15-1z" fill="#eff5f8" /><path d="M12 16h3l2-7 3 11 3-7 2 4 1-5 2 5" fill="none" stroke="#2c79b8" strokeWidth="1.400" /><path d="M18 26h7l1 4H17z" fill="#a4a9ac" /><ellipse cx="21" cy="30.500" rx="8" ry="3.200" fill="#d4d7d8" /><path d="M3 12h2v2H3z" fill="#37b34a" /></svg>
);
const Folder = () => <svg width="33" height="30" viewBox="0 0 33 30"><path d="M1 2h13l2 3h16v20H1z" fill="#ffd95c" /><path d="M1 7h31v20H1z" fill="#ffe999" /><path d="M2 2h10v3H2z" fill="#ffbf1f" /><path d="M6 29V16l3-2h15l3 2v13h-6v-8h-9v8z" fill="#3ea8e5" /></svg>;
const Excel = () => (
  <svg width="36" height="34" viewBox="0 0 36 34"><path d="M9 1h26v32H9z" fill="#185c37" /><path d="M9 1h13v8H9z" fill="#21a366" /><path d="M22 1h13v8H22z" fill="#33c481" /><path d="M9 9h13v8H9z" fill="#107c41" /><path d="M22 9h13v8H22z" fill="#21a366" /><path d="M22 17h13v8H22z" fill="#107c41" /><path d="M0 8h18v18H0z" fill="#107c41" /><path d="M5.500 12l7 10M12.500 12l-7 10" stroke="#fff" strokeWidth="2.400" /></svg>
);
const Navigator = () => (
  <svg width="36" height="36" viewBox="0 0 36 36"><defs><linearGradient id="nv" x1="0" y1="0" x2="1" y2="0"><stop offset="0" stopColor="#ffe04a" /><stop offset="1" stopColor="#f29500" /></linearGradient></defs><path d="M2 1h24l-5 8H9v17l-7 5z" fill="#2c66ab" /><path d="M2 1h24l-3 3H5v23l-3 3z" fill="#86b6e4" /><path d="M8 10h16l-4 4c2 4 6 4 9-1 1-3 1-7 0-11l5-1c3 13 0 27-12 30-3 1-6-1-8-4l-1 6-5 2z" fill="url(#nv)" /><path d="M34 2c2 10-1 22-10 27" fill="none" stroke="#a86400" strokeWidth="1.500" /></svg>
);

const APPS = [
  [Outlook, "none"], [Opera, "one"], [Chrome, "one"], [Sticky, "one"], [WeChat, "one"], [Ding, "ding"], [PyCharm, "multi"],
  [Spy, "one"], [Monitor, "one"], [Folder, "multi"], [Excel, "active"], [Chrome, "one"], [Chrome, "one"], [Navigator, "multi"],
];

function AppButton({ Icon, state }) {
  return (
    <div className={"flex h-[60px] w-[75px] shrink-0 flex-col items-center " + (state === "active" ? "bg-[linear-gradient(90deg,transparent_1px,#606060_1px_67px,#464646_67px_69px,#505050_69px_74px,transparent_74px)]" : state === "ding" ? "bg-[linear-gradient(90deg,transparent_1px,#ab5f25_1px_74px,transparent_74px)]" : "")}>
      <div className="flex h-[57px] items-center justify-center pt-[3px]"><Icon /></div>
      {state === "one" && <i className="h-[3px] w-[61px] bg-[#fcc0ae]" />}
      {state === "ding" && <i className="h-[3px] w-[73px] bg-[#ff7200]" />}
      {state === "multi" && <span className="flex"><i className="h-[3px] w-[47px] bg-[#fcc0ae]" /><i className="h-[3px] w-[14px] bg-[#c6978a]" /></span>}
      {state === "active" && <span className="flex"><i className="h-[3px] w-[66px] bg-[#fcc0ae]" /><i className="h-[3px] w-[7px] bg-[#c6978a]" /></span>}
    </div>
  );
}

function Taskbar() {
  return (
    <footer className="flex h-[60px] shrink-0 items-center bg-[linear-gradient(90deg,#080808_0,#0a0908_260px,#17110c_400px,#38281a_480px,#36302a_640px,#343333_860px,#333_1500px)] text-white">
      <svg className="ml-[24px] shrink-0" width="24" height="24" viewBox="0 0 24 24" fill="#fff"><path d="M0 3.500L10 2v9.500H0zM11 1.800L24 0v11.500H11zM0 12.500h10V22L0 20.500zM11 12.500h13V24l-13-1.800z" /></svg>
      <i className="ml-[33px] h-[36px] w-[5px] shrink-0 border-x border-[#444]" />
      <div className="ml-[17px] flex">{APPS.map(([Ic, s], i) => <AppButton key={i} Icon={Ic} state={s} />)}</div>
      <i className="ml-auto h-[36px] w-[5px] shrink-0 border-x border-[#555]" />
      <span className="mb-[28px] ml-[16px] flex size-[25px] items-center justify-center border-[1.500px] border-[#111] bg-white text-[20px] leading-[20px] text-black">拼</span>
      <I w={19} h={11} className="ml-[21px]"><path d="M1 10l8.500-8.500L18 10" stroke="#ddd" strokeWidth="1.600" /></I>
      <svg className="ml-[14px] shrink-0" width="25" height="25" viewBox="0 0 25 25"><circle cx="12.500" cy="12.500" r="12.300" fill="#dfe5e8" /><path d="M8 9h9v6c0 5-9 5-9 0z" fill="#f8d0a8" /><path d="M7 11c-1-8 12-8 11 0l-2-3H9z" fill="#3d4763" /><path d="M5 22c1-4 14-4 15 0-4 3-11 3-15 0z" fill="#fff" /><path d="M11.500 20h2v5h-2z" fill="#17a3e6" /></svg>
      <I w={25} h={20} className="ml-[11px]"><path d="M2 0v4M6 0v4M1 4h6v3c0 3-6 3-6 0zM4 9v6h3M7 5h15v12H6v-4" stroke="#eee" strokeWidth="1.500" /><path d="M9 7h11v8H9z" fill="#eee" stroke="none" /><path d="M24 8v5" stroke="#eee" strokeWidth="2" /></I>
      <I w={20} h={21} className="ml-[15px]"><path d="M1.500 20C1.500 9 8 2 19 1.500M6.500 20C6.500 12 11 7 19 6.500M11 20c0-5 3-8.500 8-9" stroke="#9a9a9a" strokeWidth="1.500" /><path d="M14.500 20c0-3 2-5 4-5" stroke="#fff" strokeWidth="1.800" /><circle cx="17.500" cy="18.500" r="1.800" fill="#fff" stroke="none" /></I>
      <I w={23} h={20} className="ml-[13px]"><path d="M1 6.500h4l5-5v17l-5-5H1z" stroke="#eee" strokeWidth="1.500" /><path d="M13 7c1 2 1 4 0 6" stroke="#eee" /><path d="M16 5c2 3 2 7 0 10M19 2.500c3.500 5 3.500 10 0 15" stroke="#888" /></I>
      <div className="ml-[15px] w-[98px] text-center text-[19px] leading-[28px]"><div>16:29</div><div>2019/6/19</div></div>
      <svg className="ml-[28px] shrink-0" width="25" height="26" viewBox="0 0 25 26"><path d="M0 1h24v18H15l-5 5v-5H0z" fill="#fff" /><path d="M5 6.500h14M5 10.500h14M5 14.500h9" stroke="#333" strokeWidth="1.500" /><path d="M20 13c4 3 1 9-5 8 1 5 10 4 9.500-3 0-3-2-5-4.500-5z" fill="#fff" stroke="#333" strokeWidth="1" /></svg>
      <i className="mr-[6px] ml-[28px] h-[60px] w-[2px] shrink-0 bg-[#777]" />
    </footer>
  );
}

export default function App() {
  return (
    <div className="flex h-[1080px] w-[1920px] flex-col overflow-hidden bg-[#f3f2f1] font-['Open_Sans','Noto_Sans_CJK_SC',sans-serif] text-[#444]">
      <TitleBar />
      <MenuTabs />
      <Ribbon />
      <QuickAccess />
      <div className="h-px shrink-0 bg-[#d0d0d0]" />
      <FormulaBar />
      <SheetArea />
      <SheetTabs />
      <StatusBar />
      <Taskbar />
    </div>
  );
}
